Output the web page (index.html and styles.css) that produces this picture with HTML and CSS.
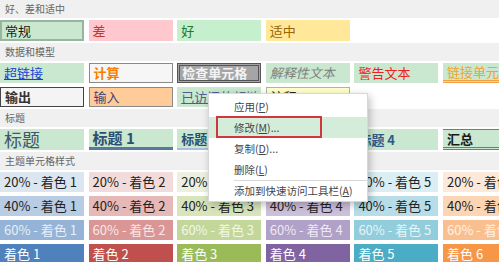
FILE: index.html
```html
<!DOCTYPE html>
<html lang="zh-CN">
<head>
    <meta charset="UTF-8">
    <meta name="viewport" content="width=device-width, initial-scale=1.0">
    <title>单元格样式</title>
    <link rel="stylesheet" href="styles.css">
</head>
<body>

    <div class="gallery">
        <div class="group-title">好、差和适中</div>
        <div class="group">
            <div class="row">
                <div class="cell normal">常规</div>
                <div class="cell bad">差</div>
                <div class="cell good">好</div>
                <div class="cell neutral">适中</div>
            </div>
        </div>

        <div class="group-title">数据和模型</div>
        <div class="group">
            <div class="row">
                <div class="cell link">超链接</div>
                <div class="cell calc">计算</div>
                <div class="cell check">检查单元格</div>
                <div class="cell explain">解释性文本</div>
                <div class="cell warn">警告文本</div>
                <div class="cell linked">链接单元格</div>
            </div>
            <div class="row">
                <div class="cell output">输出</div>
                <div class="cell input">输入</div>
                <div class="cell visited">已访问的超链接</div>
                <div class="cell note">注释</div>
            </div>
        </div>

        <div class="group-title">标题</div>
        <div class="group">
            <div class="row">
                <div class="cell title">标题</div>
                <div class="cell h1">标题 1</div>
                <div class="cell h2">标题 2</div>
                <div class="cell h3">标题 3</div>
                <div class="cell h4">标题 4</div>
                <div class="cell total">汇总</div>
            </div>
        </div>

        <div class="group-title">主题单元格样式</div>
        <div class="group">
            <div class="row">
                <div class="cell a1-20">20% - 着色 1</div>
                <div class="cell a2-20">20% - 着色 2</div>
                <div class="cell a3-20">20% - 着色 3</div>
                <div class="cell a4-20">20% - 着色 4</div>
                <div class="cell a5-20">20% - 着色 5</div>
                <div class="cell a6-20">20% - 着色 6</div>
            </div>
            <div class="row">
                <div class="cell a1-40">40% - 着色 1</div>
                <div class="cell a2-40">40% - 着色 2</div>
                <div class="cell a3-40">40% - 着色 3</div>
                <div class="cell a4-40">40% - 着色 4</div>
                <div class="cell a5-40">40% - 着色 5</div>
                <div class="cell a6-40">40% - 着色 6</div>
            </div>
            <div class="row">
                <div class="cell faded a1-60">60% - 着色 1</div>
                <div class="cell faded a2-60">60% - 着色 2</div>
                <div class="cell faded a3-60">60% - 着色 3</div>
                <div class="cell faded a4-60">60% - 着色 4</div>
                <div class="cell faded a5-60">60% - 着色 5</div>
                <div class="cell faded a6-60">60% - 着色 6</div>
            </div>
            <div class="row">
                <div class="cell light a1">着色 1</div>
                <div class="cell light a2">着色 2</div>
                <div class="cell light a3">着色 3</div>
                <div class="cell light a4">着色 4</div>
                <div class="cell light a5">着色 5</div>
                <div class="cell light a6">着色 6</div>
            </div>
        </div>
    </div>

    <!-- 右键菜单 -->
    <ul class="menu">
        <li class="menu-item">应用(<u>P</u>)</li>
        <li class="menu-item active">修改(<u>M</u>)...</li>
        <li class="menu-item">复制(<u>D</u>)...</li>
        <li class="menu-item">删除(<u>L</u>)</li>
        <li class="separator"></li>
        <li class="menu-item">添加到快速访问工具栏(<u>A</u>)</li>
    </ul>

</body>
</html>
```

FILE: styles.css
```css
body {
    margin: 0;
    padding: 0;
    width: 499px;
    height: 262px;
    overflow: hidden;
    position: relative;
    background-color: #f0f0f0;
    font-family: "Noto Sans CJK SC", "Noto Sans", sans-serif;
    color: #222;
}
.gallery {
    width: 540px;
}
.group-title {
    height: 18px;
    line-height: 18px;
    padding-left: 5px;
    font-size: 10px;
    color: #666;
    background-color: #f0f0f0;
}
.group {
    background-color: #fff;
    padding: 2px 0;
    display: flex;
    flex-direction: column;
    gap: 4px;
}
.row {
    display: grid;
    grid-template-columns: repeat(6, 84px);
    column-gap: 4.6px;
}
.cell {
    height: 20px;
    box-sizing: border-box;
    display: flex;
    align-items: center;
    padding-left: 4px;
    font-size: 13px;
    line-height: 16px;
    white-space: nowrap;
    overflow: hidden;
    background-color: #c9e8cf;
}

/* 好、差和适中 */
.normal {
    height: 21px;
    border: 2px solid #98b59d;
    padding-left: 3px;
    color: #1a1a1a;
}
.bad {
    height: 21px;
    background-color: #ffc7ce;
    color: #c0392b;
}
.good {
    height: 21px;
    background-color: #c6efce;
    color: #1f7a2c;
}
.neutral {
    height: 21px;
    background-color: #ffe89a;
    color: #9c6500;
}

/* 数据和模型 */
.link {
    color: #1a3fd6;
    text-decoration: underline;
}
.calc {
    background-color: #f6f6f6;
    border: 1px solid #8a8a8a;
    color: #fa7d00;
    font-weight: bold;
}
.check {
    background-color: #a5a5a5;
    border: 3px double #555;
    color: #f4f4f4;
    font-weight: bold;
    padding-left: 2px;
}
.explain {
    color: #808080;
    font-style: italic;
}
.warn {
    color: #f01e1e;
}
.linked {
    color: #f5a030;
    border-bottom: 3px double #f0a040;
}
.output {
    background-color: #f4f4f4;
    border: 1px solid #444;
    color: #333;
    font-weight: bold;
}
.input {
    background-color: #ffcc99;
    border: 1px solid #8a8a8a;
    color: #3f3f76;
}
.visited {
    color: #4e5e8c;
    text-decoration: underline;
}
.note {
    background-color: #ffffcc;
    border: 1px solid #b2b2b2;
}

/* 标题 */
.row .title,
.row .h1,
.row .h2,
.row .h3,
.row .h4,
.row .total {
    height: 21px;
}
.title {
    font-size: 18px;
    line-height: 21px;
    color: #44546a;
}
.h1 {
    font-size: 15px;
    font-weight: bold;
    color: #2e4e72;
    border-bottom: 3px solid #5878a0;
}
.h2 {
    font-weight: bold;
    color: #2e4e72;
    border-bottom: 2px solid #a7bfde;
}
.h3 {
    font-weight: bold;
    color: #2e4e72;
    border-bottom: 2px solid #95b3d7;
}
.h4 {
    font-weight: bold;
    color: #2e5a8a;
}
.total {
    font-weight: bold;
    color: #1a1a1a;
    border-top: 1px solid #5b7fa8;
    border-bottom: 3px double #5b7fa8;
}

/* 主题单元格样式 */
.light {
    color: #fff;
}
.faded {
    color: rgba(255, 255, 255, 0.8);
}
.a1-20 { background-color: #dce6f1; }
.a2-20 { background-color: #f2dcdb; }
.a3-20 { background-color: #ebf1de; }
.a4-20 { background-color: #e4dfec; }
.a5-20 { background-color: #daeef3; }
.a6-20 { background-color: #fde9d9; }
.a1-40 { background-color: #b8cce4; }
.a2-40 { background-color: #e6b8b7; }
.a3-40 { background-color: #d8e4bc; }
.a4-40 { background-color: #ccc0da; }
.a5-40 { background-color: #b7dee8; }
.a6-40 { background-color: #fcd5b4; }
.a1-60 { background-color: #95b3d7; }
.a2-60 { background-color: #da9694; }
.a3-60 { background-color: #c4d79b; }
.a4-60 { background-color: #b1a0c7; }
.a5-60 { background-color: #92cddc; }
.a6-60 { background-color: #fabf8f; }
.a1 { background-color: #4f81bd; }
.a2 { background-color: #c0504d; }
.a3 { background-color: #9bbb59; }
.a4 { background-color: #8064a2; }
.a5 { background-color: #4bacc6; }
.a6 { background-color: #f79646; }

/* 右键菜单 */
.menu {
    position: absolute;
    left: 208px;
    top: 93px;
    width: 160px;
    margin: 0;
    padding: 2px 0 0;
    list-style: none;
    box-sizing: border-box;
    background-color: #fff;
    border: 1px solid #d8d8d8;
    box-shadow: 2px 3px 8px rgba(0, 0, 0, 0.25);
}
.menu-item {
    position: relative;
    height: 21px;
    line-height: 21px;
    padding-left: 25px;
    font-size: 10.5px;
    color: #444;
    white-space: nowrap;
}
.menu-item u {
    text-underline-offset: 1px;
}
.menu-item.active {
    background-color: #d4ecda;
}
.menu-item.active::after {
    content: "";
    position: absolute;
    left: 7px;
    width: 102px;
    top: -1px;
    bottom: 0;
    border: 2px solid #d0383e;
}
.separator {
    height: 1px;
    margin-left: 25px;
    background-color: #d8d8d8;
}
.menu-item:last-child {
    height: 20px;
    line-height: 20px;
}
```
